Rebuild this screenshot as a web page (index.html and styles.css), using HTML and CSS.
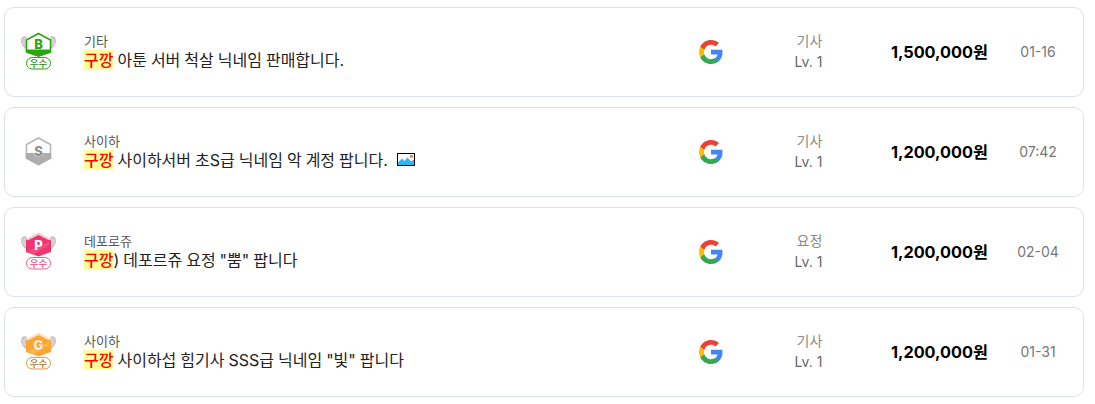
FILE: index.html
```html
<!DOCTYPE html>
<html lang="ko">
<head>
<meta charset="utf-8">
<title>거래 목록</title>
<link rel="stylesheet" href="styles.css">
</head>
<body>
<svg class="defs" width="0" height="0" aria-hidden="true">
  <defs>
    <g id="wings">
      <path d="M9.500 6.500C6.500 5.500 4 7.500 4 11c0 3.500 2.500 7 6 8.500z" fill="#c0c0c0"/>
      <path d="M6 9v6M8 7.500v9" stroke="#efefef" stroke-width=".8"/>
      <path d="M33.500 6.500C36.500 5.500 39 7.500 39 11c0 3.500-2.500 7-6 8.500z" fill="#c0c0c0"/>
      <path d="M37 9v6M35 7.500v9" stroke="#efefef" stroke-width=".8"/>
    </g>
    <g id="google">
      <path fill="#4285F4" d="M23.500 12.300c0-.9-.1-1.700-.2-2.500H12v4.700h6.500c-.3 1.500-1.100 2.800-2.400 3.600v3h3.900c2.200-2.100 3.500-5.100 3.500-8.800z"/>
      <path fill="#34A853" d="M12 24c3.200 0 6-1.100 8-2.900l-3.900-3c-1.100.7-2.500 1.200-4.100 1.200-3.100 0-5.800-2.100-6.700-5H1.300v3.100C3.300 21.300 7.300 24 12 24z"/>
      <path fill="#FBBC05" d="M5.300 14.300c-.5-1.500-.5-3.100 0-4.600V6.600H1.300c-1.700 3.400-1.700 7.400 0 10.800z"/>
      <path fill="#EA4335" d="M12 4.700c1.800 0 3.300.6 4.600 1.800l3.400-3.400C17.900 1.200 15.200 0 12 0 7.300 0 3.300 2.700 1.300 6.600l4 3.100c.9-2.900 3.600-5 6.700-5z"/>
    </g>
  </defs>
</svg>
<main class="list">
  <article class="card">
    <div class="badge-cell">
      <svg class="badge" width="42" height="44" viewBox="0 0 42 44">
        <use href="#wings"/>
        <path d="M21.500 3.500 33.500 10V22L21.500 26 9.500 22V10z" fill="#fff" stroke="#2aa70f" stroke-width="1.600"/>
        <path d="M9 19.500H34V22.500L21.500 26.800 9 22.500z" fill="#2aa70f"/>
        <text class="badge-letter" x="21.500" y="19" fill="#2aa70f">B</text>
        <rect x="9.500" y="27.500" width="24" height="11.500" rx="5.700" fill="#fff" stroke="#2aa70f"/>
        <text class="badge-grade" x="21.500" y="36.700" fill="#2a8a18">우수</text>
      </svg>
    </div>
    <div class="info">
      <div class="category">기타</div>
      <div class="title"><mark class="tag">구깡</mark> 아툰 서버 척살 닉네임 판매합니다.</div>
    </div>
    <svg class="g-logo" width="24" height="24" viewBox="0 0 24 24"><use href="#google"/></svg>
    <div class="char"><span class="job">기사</span><span class="level">Lv. 1</span></div>
    <div class="price">1,500,000원</div>
    <div class="date">01-16</div>
  </article>

  <article class="card">
    <div class="badge-cell">
      <svg class="badge" width="42" height="44" viewBox="0 0 42 44">
        <path d="M21.500 8 33.500 14.500V28L21.500 34.500 9.500 28V14.500z" fill="#fff" stroke="#b8b8b8" stroke-width="1.600"/>
        <path d="M8.800 23H34.200V28.500L21.500 35.400 8.800 28.500z" fill="#adadad"/>
        <text class="badge-letter" x="21.500" y="25.500" fill="#8f8f8f" stroke="#fff" stroke-width=".7" paint-order="stroke">S</text>
      </svg>
    </div>
    <div class="info">
      <div class="category">사이하</div>
      <div class="title"><mark class="tag">구깡</mark> 사이하서버 초S급 닉네임 악 계정 팝니다.
        <svg class="pic" width="18" height="13" viewBox="0 0 18 13">
          <rect x=".5" y=".5" width="17" height="12" fill="#fff" stroke="#000"/>
          <path d="M1 12V9.500L5 5.500 7.500 8 10.500 4.500 14 8.500 17 6.500V12z" fill="#29b6f6"/>
          <circle cx="14.500" cy="3.200" r="1.500" fill="#ff7043"/>
        </svg>
      </div>
    </div>
    <svg class="g-logo" width="24" height="24" viewBox="0 0 24 24"><use href="#google"/></svg>
    <div class="char"><span class="job">기사</span><span class="level">Lv. 1</span></div>
    <div class="price">1,200,000원</div>
    <div class="date">07:42</div>
  </article>

  <article class="card">
    <div class="badge-cell">
      <svg class="badge" width="42" height="44" viewBox="0 0 42 44">
        <use href="#wings"/>
        <path d="M21.500 3 34 9.500V22L21.500 26.500 9 22V9.500z" fill="#ef3570"/>
        <path d="M21.500 3 34 9.500 32 10.200 21.500 5 11 10.200 9 9.500z" fill="#fff" opacity=".75"/>
        <path d="M11 21 32 12V15L17 24z" fill="#f7688f" opacity=".5"/>
        <text class="badge-letter" x="21.500" y="20" fill="#fff">P</text>
        <rect x="9.500" y="27.500" width="24" height="11.500" rx="5.700" fill="#fff" stroke="#f0608a"/>
        <text class="badge-grade" x="21.500" y="36.700" fill="#ee4a7c">우수</text>
      </svg>
    </div>
    <div class="info">
      <div class="category">데포로쥬</div>
      <div class="title"><mark class="tag">구깡</mark>) 데포르쥬 요정 "뿜" 팝니다</div>
    </div>
    <svg class="g-logo" width="24" height="24" viewBox="0 0 24 24"><use href="#google"/></svg>
    <div class="char"><span class="job">요정</span><span class="level">Lv. 1</span></div>
    <div class="price">1,200,000원</div>
    <div class="date">02-04</div>
  </article>

  <article class="card">
    <div class="badge-cell">
      <svg class="badge" width="42" height="44" viewBox="0 0 42 44">
        <use href="#wings"/>
        <path d="M21.500 3 34 9.500V22L21.500 26.500 9 22V9.500z" fill="#ffa533"/>
        <path d="M21.500 3 34 9.500 32 10.200 21.500 5 11 10.200 9 9.500z" fill="#ffe6c4"/>
        <path d="M11 21 32 12V15L17 24z" fill="#ffc06e" opacity=".6"/>
        <text class="badge-letter" x="21.500" y="20" fill="#fff" stroke="#ef9a2c" stroke-width=".3">G</text>
        <rect x="9.500" y="27.500" width="24" height="11.500" rx="5.700" fill="#fff" stroke="#e29a3e"/>
        <text class="badge-grade" x="21.500" y="36.700" fill="#a8712a">우수</text>
      </svg>
    </div>
    <div class="info">
      <div class="category">사이하</div>
      <div class="title"><mark class="tag">구깡</mark> 사이하섭 힘기사 SSS급 닉네임 "빛" 팝니다</div>
    </div>
    <svg class="g-logo" width="24" height="24" viewBox="0 0 24 24"><use href="#google"/></svg>
    <div class="char"><span class="job">기사</span><span class="level">Lv. 1</span></div>
    <div class="price">1,200,000원</div>
    <div class="date">01-31</div>
  </article>
</main>
</body>
</html>
```
FILE: styles.css
```css
* { box-sizing: border-box; }
html, body { margin: 0; padding: 0; background: #fff; }
body {
  font-family: Inter, "Noto Sans CJK KR", sans-serif;
  color: #222;
  overflow: hidden;
}
.defs { position: absolute; }
.list {
  display: flex;
  flex-direction: column;
  gap: 10px;
  padding: 7px 11px 0 4px;
}
.card {
  display: grid;
  grid-template-columns: 79px 603px 48px 148px 105px 78px;
  align-items: center;
  height: 90px;
  border: 1px solid #dde1ee;
  border-radius: 10px;
  background: #fff;
}
.badge-cell { display: flex; justify-content: flex-start; padding-left: 12px; }
.badge { display: block; }
.badge-letter {
  font: 800 13px Inter, sans-serif;
  text-anchor: middle;
}
.badge-grade {
  font: 500 9.500px "Noto Sans CJK KR", sans-serif;
  text-anchor: middle;
}
.info { display: flex; flex-direction: column; padding-bottom: 2px; }
.category {
  font-size: 13px;
  line-height: 18px;
  color: #555;
}
.title {
  font-size: 16px;
  line-height: 20px;
  word-spacing: -.5px;
  color: #222;
  white-space: nowrap;
}
.tag {
  background: #ffff99;
  color: #f00;
  font-weight: 500;
}
.pic { vertical-align: 0; margin-left: 5px; }
.g-logo { justify-self: center; }
.char {
  display: flex;
  flex-direction: column;
  align-items: center;
  gap: 3px;
  font-size: 14px;
  line-height: 18px;
  padding-bottom: 2px;
  padding-left: 1px;
}
.job { color: #8a8a8a; }
.level { color: #666; margin-right: 2px; }
.price {
  font-size: 16.300px;
  font-weight: 700;
  line-height: 20px;
  color: #000;
  text-align: right;
  white-space: nowrap;
}
.date {
  margin-left: 17px;
  margin-right: -5px;
  font-size: 14px;
  line-height: 18px;
  color: #777;
  text-align: center;
}
```
